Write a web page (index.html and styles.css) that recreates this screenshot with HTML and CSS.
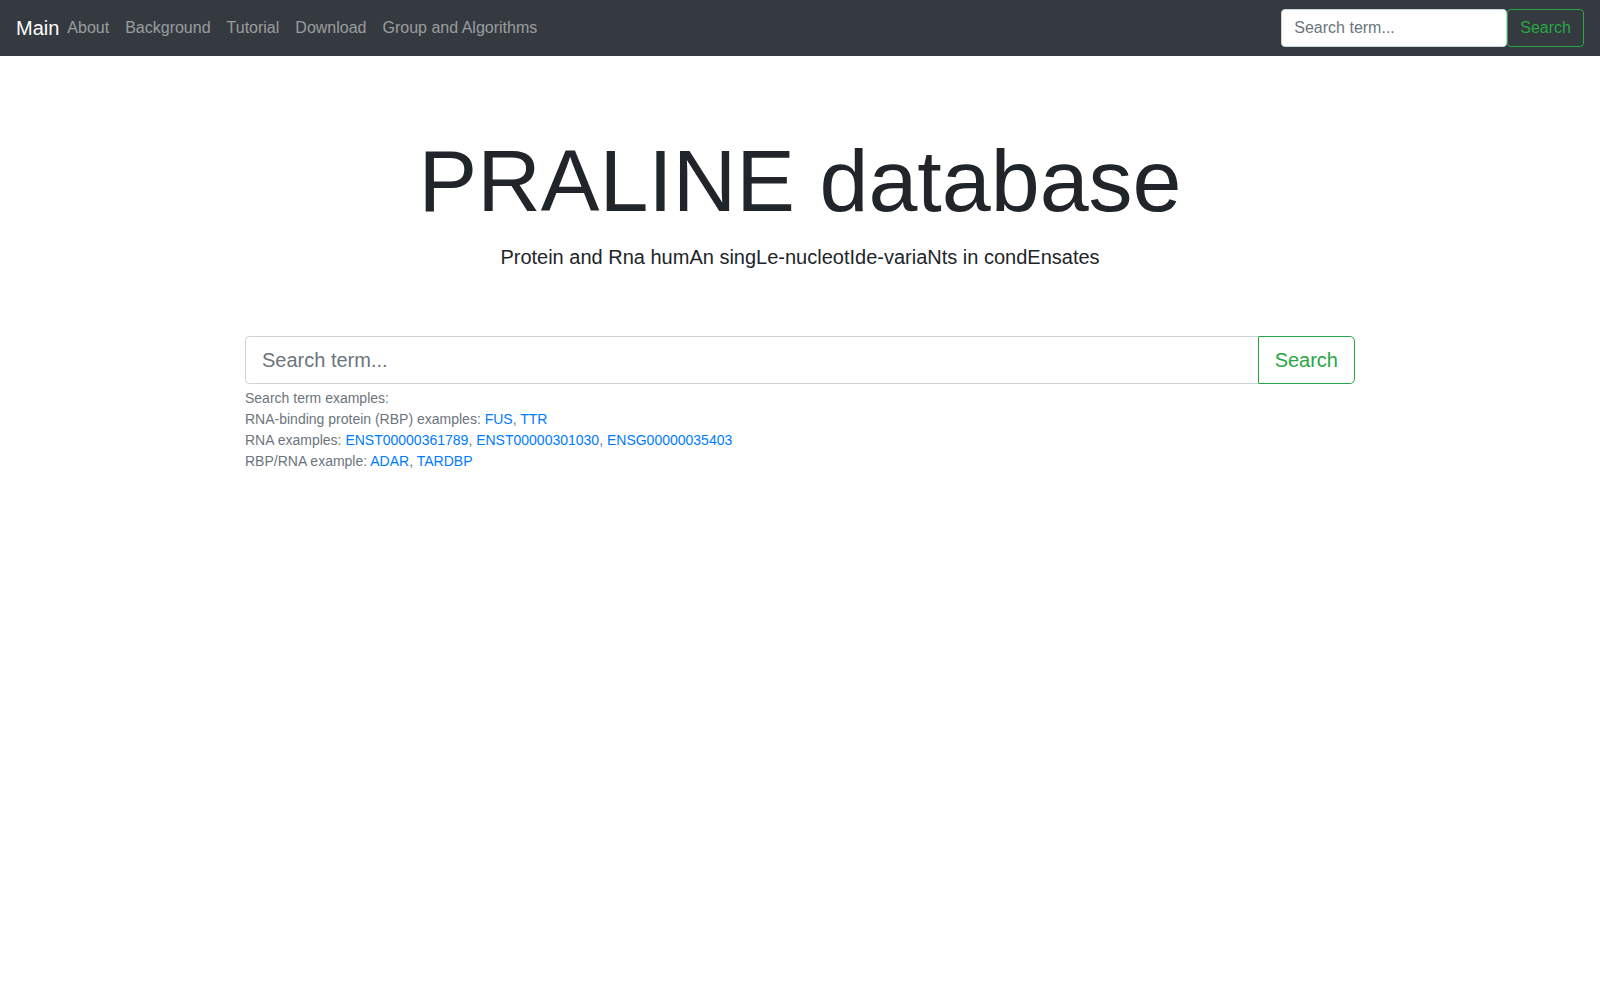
FILE: index.html
```html
<html>
	<head>
		<title>PRALINE database</title>
		<link rel="stylesheet" href="styles.css">
	</head>
	<body>
		<nav class='navbar'>
			<a class='brand' href='#'>Main</a>
			<ul class='nav-links'>
				<li><a href='#'>About</a></li>
				<li><a href='#'>Background</a></li>
				<li><a href='#'>Tutorial</a></li>
				<li><a href='#'>Download</a></li>
				<li><a href='#'>Group and Algorithms</a></li>
			</ul>
			<form class='nav-search'>
				<input type='text' placeholder='Search term...'>
				<button type='button'>Search</button>
			</form>
		</nav>
		<header class='hero'>
			<h1>PRALINE database</h1>
			<p class='lead'>Protein and Rna humAn singLe-nucleotIde-variaNts in condEnsates</p>
		</header>
		<div class='container'>
			<form class='search-group'>
				<input type='text' placeholder='Search term...'>
				<button type='button'>Search</button>
			</form>
			<small class='examples'>
				<div>Search term examples:</div>
				<div>RNA-binding protein (RBP) examples: <a href='#'>FUS</a>, <a href='#'>TTR</a></div>
				<div>RNA examples: <a href='#'>ENST00000361789</a>, <a href='#'>ENST00000301030</a>, <a href='#'>ENSG00000035403</a></div>
				<div>RBP/RNA example: <a href='#'>ADAR</a>, <a href='#'>TARDBP</a></div>
			</small>
		</div>
	</body>
</html>
```
FILE: styles.css
```css
body{
	margin:0;
	font-family:"Liberation Sans",Arial,sans-serif;
	font-size:16px;
	line-height:1.5;
	color:#212529;
	background:#fff;
}
a{
	text-decoration:none;
}
input,button{
	font-family:inherit;
	line-height:1.5;
	margin:0;
	box-sizing:border-box;
}
.navbar{
	display:flex;
	align-items:center;
	padding:8px 16px;
	background:#343a40;
}
.navbar .brand{
	font-size:20px;
	line-height:30px;
	padding:5px 0;
	color:#fff;
}
.nav-links{
	display:flex;
	list-style:none;
	margin:0;
	padding:0;
}
.nav-links a{
	display:block;
	padding:8px;
	color:rgba(255,255,255,.5);
}
.nav-search{
	display:flex;
	margin:0 0 0 auto;
}
.nav-search input{
	width:226px;
	height:38px;
	padding:6px 12px;
	font-size:16px;
	border:1px solid #ced4da;
	border-radius:4px;
	color:#495057;
}
.nav-search button{
	height:38px;
	padding:6px 12px;
	font-size:16px;
	color:#28a745;
	background:transparent;
	border:1px solid #28a745;
	border-radius:4px;
}
input::placeholder{
	color:#6c757d;
	opacity:1;
}
.hero{
	text-align:center;
	padding-top:72px;
}
.hero h1{
	margin:0 0 8px;
	font-size:88px;
	font-weight:300;
	line-height:1.2;
}
.hero .lead{
	margin:0;
	font-size:20px;
	font-weight:300;
	line-height:30px;
}
.container{
	max-width:1110px;
	margin:64px auto 0;
	padding:0 15px;
}
.search-group{
	display:flex;
	margin:0;
}
.search-group input{
	flex:1;
	height:48px;
	padding:9px 16px 7px;
	font-size:20px;
	border:1px solid #ced4da;
	border-right:0;
	border-radius:5px 0 0 5px;
}
.search-group button{
	height:48px;
	padding:8px 16px;
	font-size:20px;
	color:#28a745;
	background:transparent;
	border:1px solid #28a745;
	border-radius:0 5px 5px 0;
}
.examples{
	display:block;
	margin-top:4px;
	font-size:14px;
	line-height:21px;
	color:#6c757d;
}
.examples a{
	color:#007bff;
}
```
